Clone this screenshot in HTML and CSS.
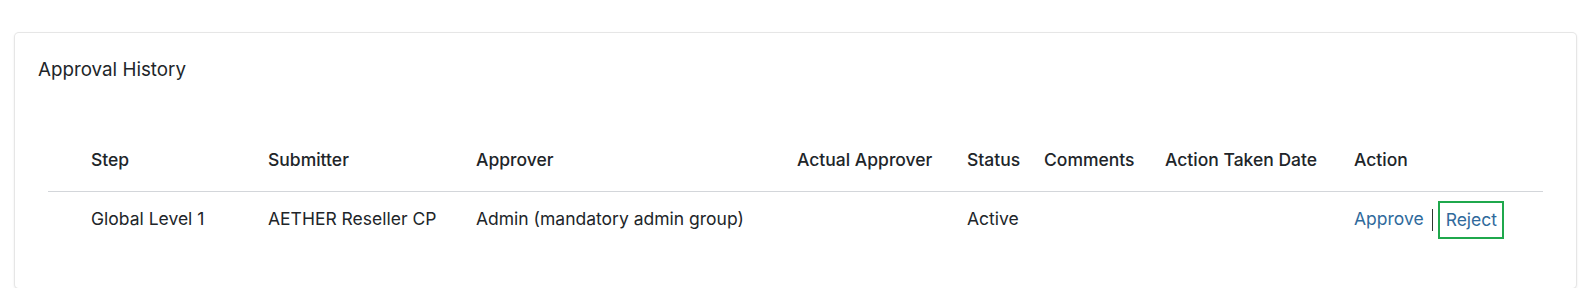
FILE: index.html
```html
<!DOCTYPE html>
<html>
    <head>
        <meta charset="utf-8">
        <title>Approval History</title>
        <link rel="stylesheet" href="styles.css">
    </head>
    <body>
        <div class="card">
            <h2 class="card-title">Approval History</h2>
            <table class="history">
                <colgroup>
                    <col class="c-step">
                    <col class="c-submitter">
                    <col class="c-approver">
                    <col class="c-actual">
                    <col class="c-status">
                    <col class="c-comments">
                    <col class="c-date">
                    <col class="c-action">
                </colgroup>
                <thead>
                    <tr>
                        <th class="first">Step</th>
                        <th>Submitter</th>
                        <th>Approver</th>
                        <th>Actual Approver</th>
                        <th>Status</th>
                        <th>Comments</th>
                        <th>Action Taken Date</th>
                        <th>Action</th>
                    </tr>
                </thead>
                <tbody>
                    <tr>
                        <td class="first">Global Level 1</td>
                        <td>AETHER Reseller CP</td>
                        <td>Admin (mandatory admin group)</td>
                        <td></td>
                        <td>Active</td>
                        <td></td>
                        <td></td>
                        <td class="actions">
                            <a href="#" class="link">Approve</a><span class="sep"></span><a href="#" class="link reject">Reject</a>
                        </td>
                    </tr>
                </tbody>
            </table>
        </div>
    </body>
</html>
```

FILE: styles.css
```css
body {
    margin: 0;
    padding: 33px 20px 0 15px;
    background: #ffffff;
    font-family: Inter, "Noto Sans", sans-serif;
    font-size: 17.5px;
    color: #212529;
}
.card {
    background: #ffffff;
    border-radius: 4px;
    box-shadow: 0 0 0 1px #e6e6e6, 0 1px 3px rgba(0, 0, 0, 0.18);
    padding: 25px 10px 0 23px;
    height: 255px;
    box-sizing: border-box;
}
.card-title {
    margin: 0;
    font-size: 18.8px;
    font-weight: 400;
    line-height: 24px;
}
.history {
    margin: 55px 0 0 10px;
    width: 1495px;
    table-layout: fixed;
    border-collapse: collapse;
}
.c-step { width: 208px; }
.c-submitter { width: 208px; }
.c-approver { width: 321px; }
.c-actual { width: 170px; }
.c-status { width: 77px; }
.c-comments { width: 121px; }
.c-date { width: 189px; }
.c-action { width: 201px; }
th {
    text-align: left;
    font-weight: 500;
    line-height: 22px;
    padding: 12px 12px 20px 12px;
    border-bottom: 1px solid #d3d6da;
    white-space: nowrap;
}
td {
    line-height: 22px;
    padding: 16px 12px 12px;
    white-space: nowrap;
    vertical-align: top;
}
.first {
    padding-left: 43px;
}
.actions {
    padding-top: 9px;
}
.link {
    color: #2f6a9c;
    text-decoration: none;
}
.sep {
    display: inline-block;
    width: 1px;
    height: 22px;
    background: #333333;
    margin: 0 5px 0 8px;
    vertical-align: middle;
}
.reject {
    display: inline-block;
    border: 2px solid #1fa84c;
    padding: 6px 5px 6px 6px;
    vertical-align: middle;
}
```
